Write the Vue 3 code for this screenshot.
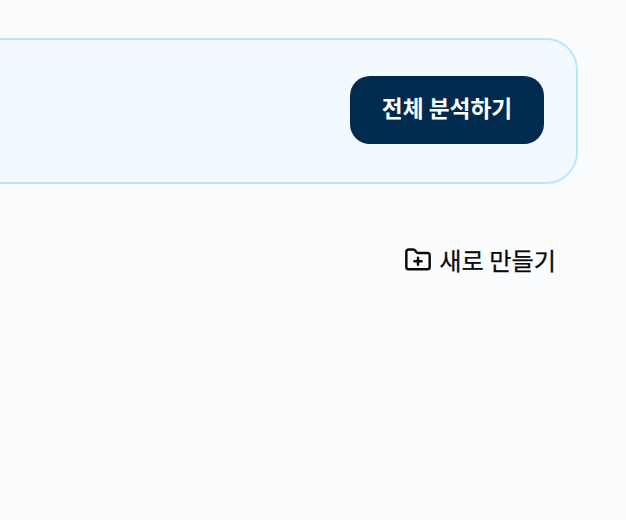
<template>
  <div class="page">
    <section class="panel">
      <button class="analyze" type="button">전체 분석하기</button>
    </section>
    <div class="actions">
      <button class="create" type="button">
        <svg class="icon" viewBox="0 0 24 24" fill="none" stroke="currentColor" stroke-width="2.1" stroke-linecap="round" stroke-linejoin="round" aria-hidden="true">
          <path d="M20 20a2 2 0 0 0 2-2V8a2 2 0 0 0-2-2h-7.9a2 2 0 0 1-1.69-.9L9.6 3.9A2 2 0 0 0 7.93 3H4a2 2 0 0 0-2 2v13a2 2 0 0 0 2 2Z" />
          <path d="M12 10v6" />
          <path d="M9 13h6" />
        </svg>
        <span class="label">새로 만들기</span>
      </button>
    </div>
  </div>
</template>

<script setup>
</script>

<style>
html, body {
  margin: 0;
  background: #fafcfd;
}
</style>

<style scoped>
.page {
  width: 626px;
  height: 520px;
  box-sizing: border-box;
  padding: 38px 48px 0 0;
  overflow: hidden;
  background: #fafcfd;
  font-family: "Noto Sans CJK KR", "Noto Sans", sans-serif;
}
.panel {
  display: flex;
  justify-content: flex-end;
  align-items: flex-start;
  box-sizing: border-box;
  height: 146px;
  margin-left: -40px;
  padding: 36px 32px 0;
  background: #f3faff;
  border: 2px solid #bae6fd;
  border-radius: 32px;
}
.analyze {
  width: 194px;
  height: 68px;
  padding: 0 0 4px;
  border: 0;
  border-radius: 20px;
  background: #002b4f;
  color: #fff;
  font: 700 22.7px/1 "Noto Sans CJK KR", "Noto Sans", sans-serif;
}
.actions {
  display: flex;
  justify-content: flex-end;
  margin-top: 56px;
  padding-right: 22px;
}
.create {
  display: flex;
  align-items: center;
  gap: 7px;
  height: 40px;
  padding: 0;
  border: 0;
  background: transparent;
  color: #0a0a0a;
  font: 400 24.2px/1 "Noto Sans CJK KR", "Noto Sans", sans-serif;
}
.label {
  -webkit-text-stroke: 0.25px #0a0a0a;
}
.icon {
  width: 28px;
  height: 28px;
  flex: none;
}
</style>
